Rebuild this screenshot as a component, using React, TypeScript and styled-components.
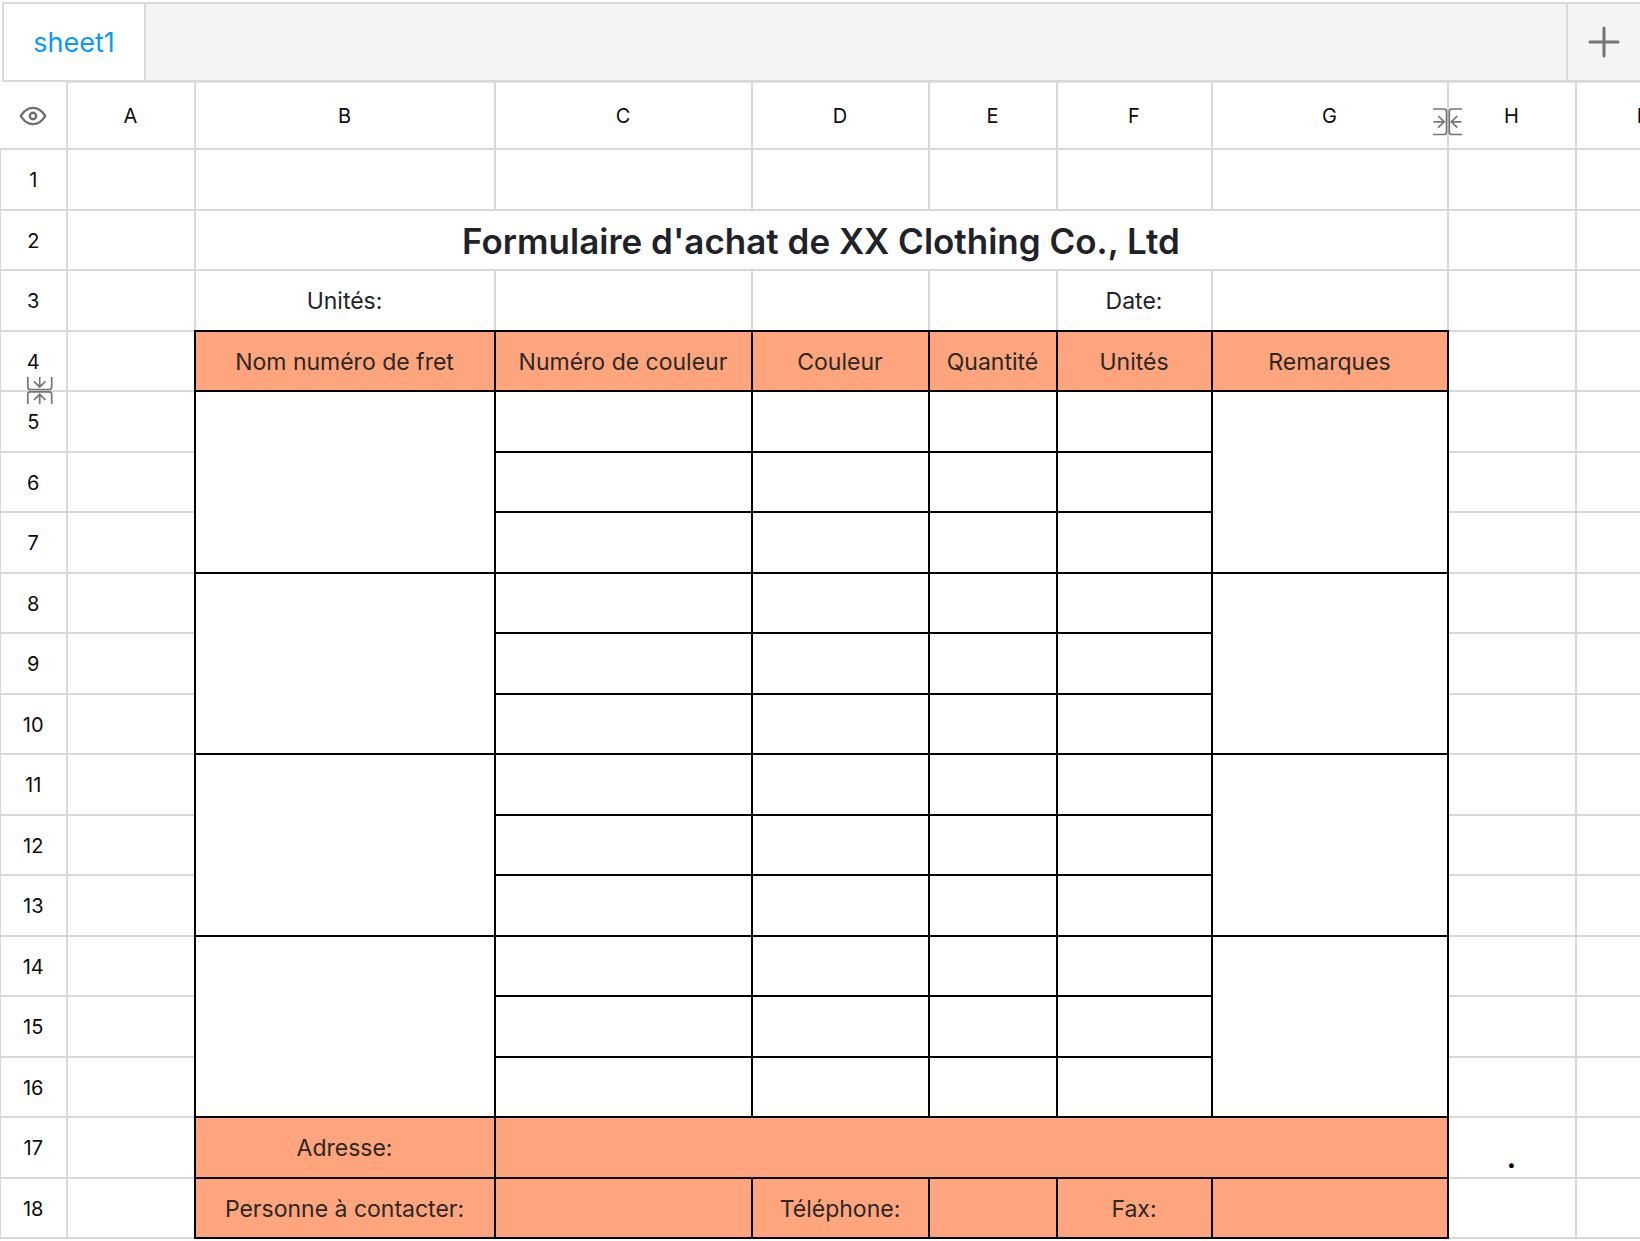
import React from "react";
import styled, { createGlobalStyle, css } from "styled-components";

const grid = "#d8d8d8";
const ink = "#000000";
const accent = "#fea57d";

const GlobalStyle = createGlobalStyle`
  *, *::before, *::after { box-sizing: border-box; }
  body {
    margin: 0;
    background: #ffffff;
    font-family: Inter, "Liberation Sans", sans-serif;
  }
`;

const Page = styled.main`
  display: flex;
  flex-direction: column;
  height: 100vh;
  overflow: hidden;
`;

const TabBar = styled.nav`
  display: flex;
  flex: none;
  height: 80px;
  margin: 2px 0 0 2px;
  border: 2px solid ${grid};
  border-right: 0;
  background: #f4f4f4;
`;

const Tab = styled.button`
  width: 142px;
  padding: 2px 0 0;
  border: 0;
  border-right: 2px solid ${grid};
  background: #ffffff;
  color: #0a99ff;
  font: 400 27px/32px Inter, "Liberation Sans", sans-serif;
`;

const AddButton = styled.button`
  display: flex;
  align-items: center;
  justify-content: center;
  width: 74px;
  margin-left: auto;
  padding: 0;
  border: 0;
  border-left: 2px solid ${grid};
  background: transparent;
  color: #757575;
`;

const SheetArea = styled.div`
  flex: 1;
  min-height: 0;
  overflow: hidden;
`;

const Sheet = styled.table`
  width: max-content;
  table-layout: fixed;
  border-collapse: collapse;
`;

const Column = styled.col<{ $width: number }>`
  width: ${(p) => p.$width}px;
`;

const HeaderRow = styled.tr`
  height: 66px;
`;

const Row = styled.tr`
  height: 60px;
  &:nth-child(odd) { height: 61px; }
`;

const label = css`
  position: relative;
  padding: 2px 0 0;
  border-right: 2px solid ${grid};
  border-bottom: 2px solid ${grid};
  color: #0c0c0c;
  font-size: 20px;
  line-height: 24px;
  font-weight: 400;
  text-align: center;
`;

const Corner = styled.td`
  ${label}
`;

const ColumnLabel = styled.th`
  ${label}
  border-top: 1px solid #e2e2e2;
`;

const RowLabel = styled.th`
  ${label}
  border-left: 1px solid ${grid};
`;

const EyeButton = styled.button`
  display: block;
  margin: 0 auto;
  padding: 0;
  border: 0;
  background: transparent;
  color: #6e6e6e;
  svg { display: block; }
`;

const handle = css`
  position: absolute;
  z-index: 1;
  padding: 0;
  border: 0;
  background: transparent;
  color: #757575;
  svg { display: block; }
`;

const ColumnHandle = styled.button`
  ${handle}
  top: 25px;
  right: -16px;
`;

const RowHandle = styled.button`
  ${handle}
  left: 25px;
  bottom: -15px;
`;

type Variant = "plain" | "title" | "dot";

/* Ink rules use "double" so that they win over grid lines where borders collapse. */
const rule = (isInk: boolean) => (isInk ? `2px double ${ink}` : `2px solid ${grid}`);

const Cell = styled.td<{ $right: boolean; $bottom: boolean; $fill: boolean; $variant: Variant }>`
  padding: 2px 0 0;
  border-right: ${(p) => rule(p.$right)};
  border-bottom: ${(p) => rule(p.$bottom)};
  background: ${(p) => (p.$fill ? accent : "transparent")};
  color: ${(p) => (p.$fill ? "#2b2826" : "#1f2329")};
  font-size: 23px;
  line-height: 28px;
  text-align: center;
  white-space: nowrap;
  ${(p) => p.$variant === "title" && css`
    font-size: 35px;
    line-height: 44px;
    font-weight: 600;
  `}
  ${(p) => p.$variant === "dot" && css`
    color: ${ink};
    font-size: 36px;
    line-height: 44px;
    vertical-align: bottom;
  `}
`;

const PlusIcon = () => (
  <svg width="32" height="32" viewBox="0 0 32 32" fill="none" stroke="currentColor" strokeWidth="3" strokeLinecap="round" aria-hidden="true">
    <path d="M16 2v28M2 16h28" />
  </svg>
);

const EyeIcon = () => (
  <svg width="28" height="20" viewBox="0 0 28 20" fill="none" stroke="currentColor" strokeWidth="2.400" strokeLinejoin="round" aria-hidden="true">
    <path d="M1.800 10C5 4.600 9.200 1.900 14 1.900S23 4.600 26.200 10C23 15.400 18.800 18.100 14 18.100S5 15.400 1.800 10Z" />
    <circle cx="14" cy="10" r="3.200" strokeWidth="2.400" />
  </svg>
);

const ColumnHandleIcon = () => (
  <svg width="30" height="28" viewBox="0 0 30 28" fill="none" stroke="currentColor" strokeWidth="1.700" aria-hidden="true">
    <path d="M0 1H11Q13.500 1 13.500 3.500V24Q13.500 26.500 11 26.500H0M29 1H18.800Q16.300 1 16.300 3.500V24Q16.300 26.500 18.800 26.500H29" />
    <path d="M.5 13.800H11.200M5.200 8L11.200 13.800L5.200 19.600M28.500 13.800H18.300M24.300 8L18.300 13.800L24.300 19.600" />
  </svg>
);

const RowHandleIcon = () => (
  <svg width="28" height="28" viewBox="0 0 28 28" fill="none" stroke="currentColor" strokeWidth="1.700" aria-hidden="true">
    <path d="M1.800 0V10Q1.800 12.500 4.300 12.500H23.200Q25.700 12.500 25.700 10V0M1.800 27V17.400Q1.800 14.900 4.300 14.900H23.200Q25.700 14.900 25.700 17.400V27" />
    <path d="M13.700 0V10M8 4.300L13.700 10L19.400 4.300M13.700 27V17.300M8 23L13.700 17.300L19.400 23" />
  </svg>
);

const columns = [
  { name: "A", width: 128 },
  { name: "B", width: 300 },
  { name: "C", width: 257 },
  { name: "D", width: 177 },
  { name: "E", width: 128 },
  { name: "F", width: 155 },
  { name: "G", width: 236 },
  { name: "H", width: 128 },
  { name: "I", width: 128 },
];

const texts: Record<string, string> = {
  B2: "Formulaire d'achat de XX Clothing Co., Ltd",
  B3: "Unités:",
  F3: "Date:",
  B4: "Nom numéro de fret",
  C4: "Numéro de couleur",
  D4: "Couleur",
  E4: "Quantité",
  F4: "Unités",
  G4: "Remarques",
  B17: "Adresse:",
  H17: ".",
  B18: "Personne à contacter:",
  D18: "Téléphone:",
  F18: "Fax:",
};

const variants: Record<string, Variant> = { B2: "title", H17: "dot" };

const spans: Record<string, { cols?: number; rows?: number }> = {
  B2: { cols: 6 },
  C17: { cols: 5 },
};
for (const start of [5, 8, 11, 14]) {
  spans[`B${start}`] = { rows: 3 };
  spans[`G${start}`] = { rows: 3 };
}

const isCovered = (name: string, row: number) =>
  (row === 2 && "CDEFG".includes(name)) ||
  (row === 17 && "DEFG".includes(name)) ||
  (row >= 5 && row <= 16 && "BG".includes(name) && (row - 5) % 3 !== 0);

const rowNumbers = Array.from({ length: 18 }, (_, i) => i + 1);

export default function App() {
  return (
    <Page>
      <GlobalStyle />
      <TabBar aria-label="Sheets">
        <Tab type="button">sheet1</Tab>
        <AddButton type="button" aria-label="Add sheet">
          <PlusIcon />
        </AddButton>
      </TabBar>
      <SheetArea>
        <Sheet>
          <colgroup>
            <Column $width={66} />
            {columns.map((c) => (
              <Column key={c.name} $width={c.width} />
            ))}
          </colgroup>
          <thead>
            <HeaderRow>
              <Corner>
                <EyeButton type="button" aria-label="Toggle visibility">
                  <EyeIcon />
                </EyeButton>
              </Corner>
              {columns.map((c) => (
                <ColumnLabel key={c.name} scope="col">
                  {c.name}
                  {c.name === "G" && (
                    <ColumnHandle type="button" aria-label="Resize column G">
                      <ColumnHandleIcon />
                    </ColumnHandle>
                  )}
                </ColumnLabel>
              ))}
            </HeaderRow>
          </thead>
          <tbody>
            {rowNumbers.map((row) => (
              <Row key={row}>
                <RowLabel scope="row">
                  {row}
                  {row === 4 && (
                    <RowHandle type="button" aria-label="Resize row 4">
                      <RowHandleIcon />
                    </RowHandle>
                  )}
                </RowLabel>
                {columns.map(({ name }) => {
                  if (isCovered(name, row)) return null;
                  const id = `${name}${row}`;
                  const inForm = "BCDEFG".includes(name);
                  return (
                    <Cell
                      key={id}
                      colSpan={spans[id]?.cols}
                      rowSpan={spans[id]?.rows}
                      $right={row >= 4 && (inForm || name === "A")}
                      $bottom={row >= 3 && inForm}
                      $fill={inForm && (row === 4 || row >= 17)}
                      $variant={variants[id] ?? "plain"}
                    >
                      {texts[id]}
                    </Cell>
                  );
                })}
              </Row>
            ))}
          </tbody>
        </Sheet>
      </SheetArea>
    </Page>
  );
}
